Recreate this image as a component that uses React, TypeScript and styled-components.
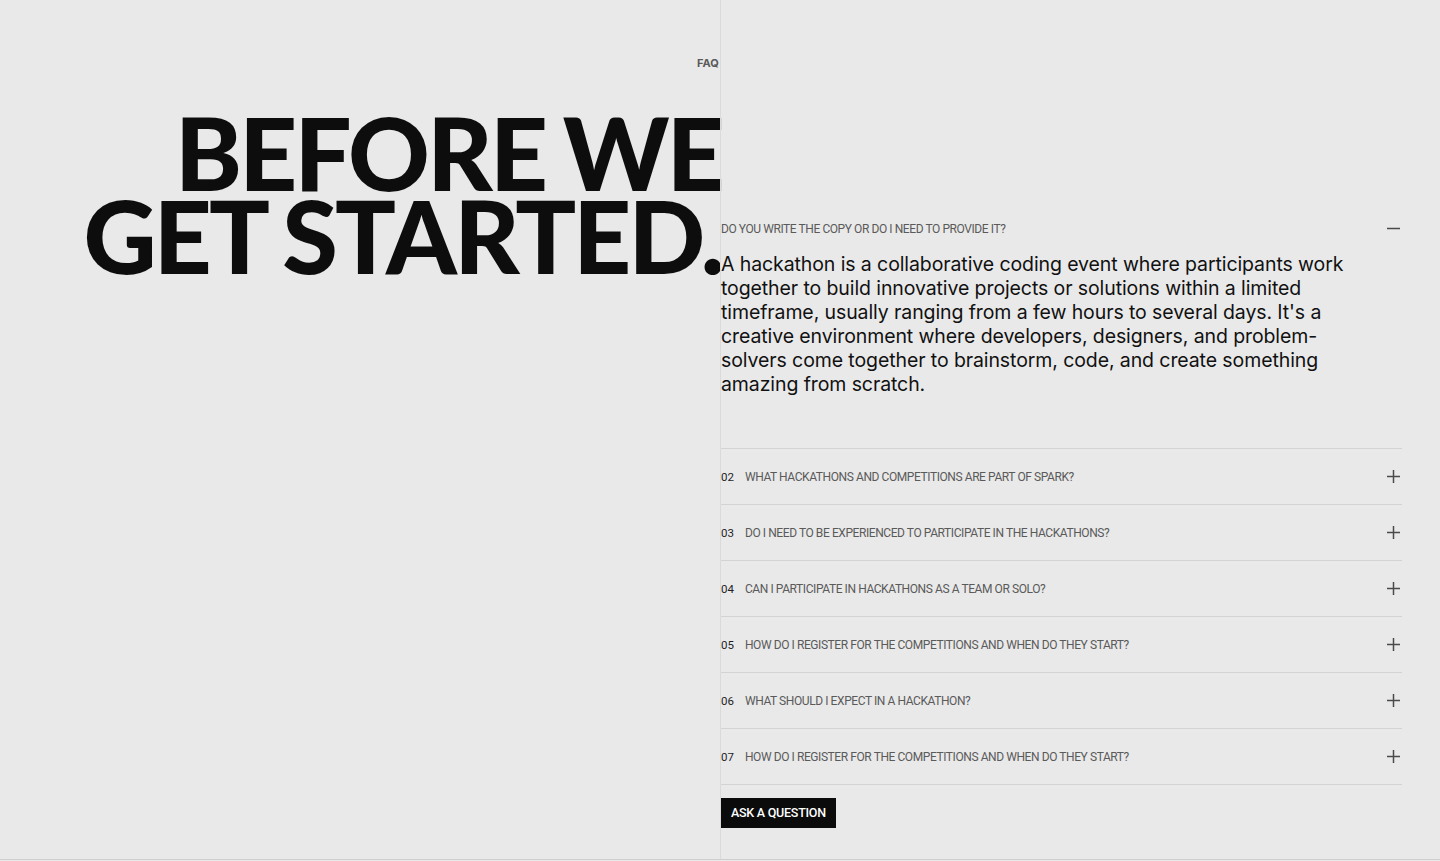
import React, { useState } from 'react';
import styled, { createGlobalStyle } from 'styled-components';

const GlobalStyle = createGlobalStyle`
  * {
    box-sizing: border-box;
  }
  body {
    margin: 0;
    background: #e9e9e9;
    font-family: Inter, 'Liberation Sans', sans-serif;
    color: #0d0d0d;
  }
`;

const Section = styled.section`
  display: grid;
  grid-template-columns: 720px 1fr;
  height: 860px;
  border-bottom: 1px solid #cfcfcf;
  overflow: hidden;
`;

const LeftColumn = styled.div`
  display: flex;
  flex-direction: column;
  align-items: flex-end;
  padding-top: 56px;
`;

const Label = styled.span`
  font-family: Inter, 'Liberation Sans', sans-serif;
  font-size: 11px;
  font-weight: 700;
  color: #5a5a5a;
  letter-spacing: 0.01em;
  margin-right: 1px;
`;

const Heading = styled.h1`
  margin: 41px -2px 0 0;
  font-family: Lato, Inter, 'Liberation Sans', sans-serif;
  font-size: 101px;
  font-weight: 900;
  line-height: 83px;
  letter-spacing: -0.028em;
  word-spacing: -3px;
  text-align: right;
  white-space: nowrap;
  color: #0d0d0d;
`;

const RightColumn = styled.div`
  border-left: 1px solid #dadada;
  padding: 201px 38px 0 0;
  display: flex;
  flex-direction: column;
`;

const List = styled.div`
  display: flex;
  flex-direction: column;
`;

const Item = styled.div<{ $open: boolean }>`
  border-bottom: 1px solid #d3d3d3;
  padding-bottom: ${(p) => (p.$open ? '52px' : '0')};
`;

const Trigger = styled.button`
  all: unset;
  cursor: pointer;
  display: flex;
  align-items: center;
  width: 100%;
  height: 55px;
  gap: 11px;
`;

const Number = styled.span`
  font-family: Roboto, 'Liberation Sans', sans-serif;
  font-size: 11.5px;
  color: #1f1f1f;
`;

const Question = styled.span`
  flex: 1;
  font-family: Roboto, 'Liberation Sans', sans-serif;
  font-size: 12px;
  letter-spacing: -0.035em;
  color: #5a5a5a;
`;

const Toggle = styled.svg`
  width: 15px;
  height: 15px;
  margin-right: 1px;
  color: #4a4a4a;
`;

const Answer = styled.p`
  margin: -4px 0 0;
  max-width: 632px;
  font-family: Inter, 'Liberation Sans', sans-serif;
  font-size: 19.5px;
  line-height: 24px;
  letter-spacing: -0.005em;
  color: #111;
`;

const AskButton = styled.button`
  align-self: flex-start;
  margin-top: 13px;
  height: 30px;
  padding: 0 10px 2px;
  border: none;
  background: #0b0b0b;
  color: #fff;
  font-family: Roboto, 'Liberation Sans', sans-serif;
  font-size: 12.5px;
  font-weight: 500;
  letter-spacing: -0.02em;
  cursor: pointer;
`;

const faqs = [
  {
    q: 'DO YOU WRITE THE COPY OR DO I NEED TO PROVIDE IT?',
    a: "A hackathon is a collaborative coding event where participants work together to build innovative projects or solutions within a limited timeframe, usually ranging from a few hours to several days. It's a creative environment where developers, designers, and problem-solvers come together to brainstorm, code, and create something amazing from scratch.",
  },
  { q: 'WHAT HACKATHONS AND COMPETITIONS ARE PART OF SPARK?', a: '' },
  { q: 'DO I NEED TO BE EXPERIENCED TO PARTICIPATE IN THE HACKATHONS?', a: '' },
  { q: 'CAN I PARTICIPATE IN HACKATHONS AS A TEAM OR SOLO?', a: '' },
  { q: 'HOW DO I REGISTER FOR THE COMPETITIONS AND WHEN DO THEY START?', a: '' },
  { q: 'WHAT SHOULD I EXPECT IN A HACKATHON?', a: '' },
  { q: 'HOW DO I REGISTER FOR THE COMPETITIONS AND WHEN DO THEY START?', a: '' },
];

const ToggleIcon: React.FC<{ open: boolean }> = ({ open }) => (
  <Toggle viewBox="0 0 15 15" fill="none" stroke="currentColor" strokeWidth="1.5">
    <line x1="1" y1="7.5" x2="14" y2="7.5" />
    {!open && <line x1="7.5" y1="1" x2="7.5" y2="14" />}
  </Toggle>
);

const App: React.FC = () => {
  const [open, setOpen] = useState(0);

  return (
    <>
      <GlobalStyle />
      <Section>
        <LeftColumn>
          <Label>FAQ</Label>
          <Heading>
            BEFORE WE
            <br />
            GET STARTED.
          </Heading>
        </LeftColumn>
        <RightColumn>
          <List>
            {faqs.map((item, i) => {
              const isOpen = open === i;
              return (
                <Item key={i} $open={isOpen}>
                  <Trigger onClick={() => setOpen(isOpen ? -1 : i)}>
                    {!isOpen && <Number>{String(i + 1).padStart(2, '0')}</Number>}
                    <Question>{item.q}</Question>
                    <ToggleIcon open={isOpen} />
                  </Trigger>
                  {isOpen && <Answer>{item.a}</Answer>}
                </Item>
              );
            })}
          </List>
          <AskButton>ASK A QUESTION</AskButton>
        </RightColumn>
      </Section>
    </>
  );
};

export default App;
